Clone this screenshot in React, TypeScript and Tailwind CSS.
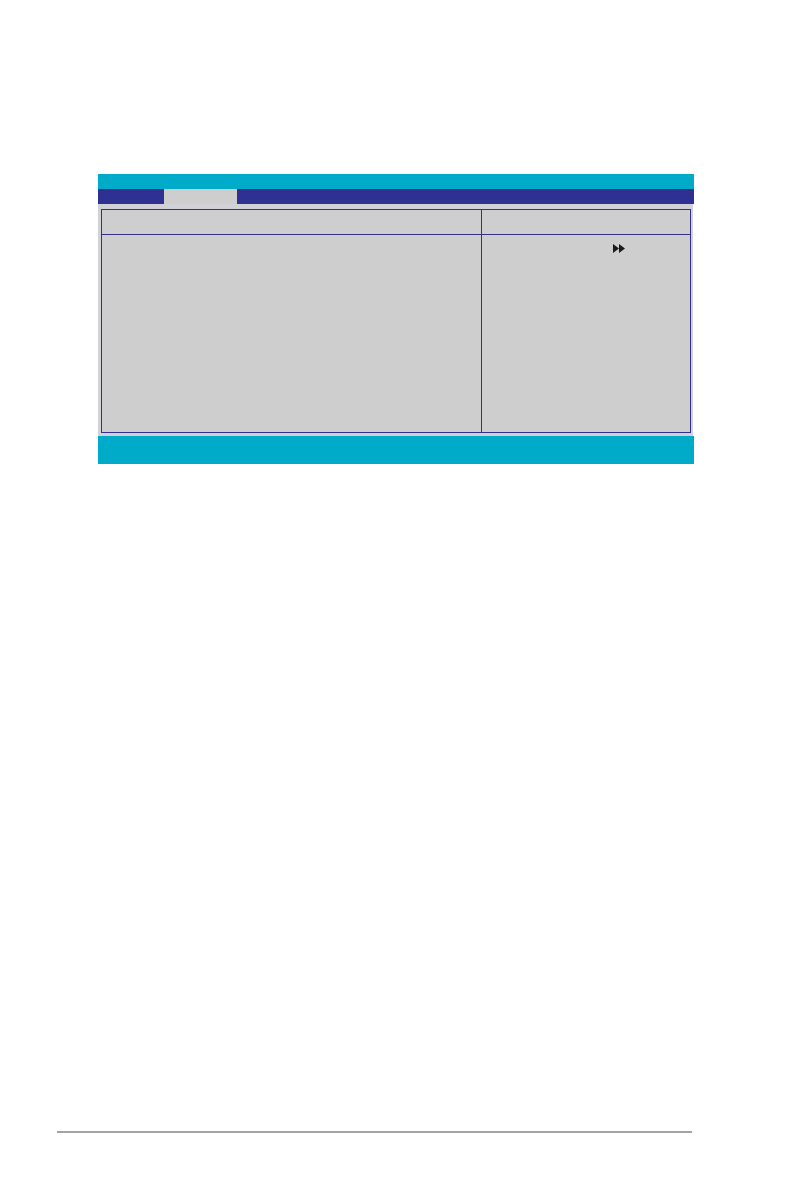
function FastForwardIcon() {
  return (
    <svg width="12" height="9" viewBox="0 0 12 9" fill="#1c1a1b" aria-hidden="true">
      <path d="M0 0L6 4.5L0 9Z" />
      <path d="M6 0L12 4.5L6 9Z" />
    </svg>
  );
}

function SetupScreen() {
  return (
    <section className="ml-[98px] mr-[100px]">
      <header className="h-[15px] bg-[#00abca]" />
      <nav className="flex h-[15px] bg-[#2e3092] pl-[66px]">
        <div className="w-[73px] border-t border-[#a5dbe2] bg-[#cecece]" />
      </nav>
      <div className="mr-px bg-[#d2d1d8] pt-[5px] pr-[2px] pb-[3px] pl-[3px]">
        <div className="grid grid-cols-[1fr_209px] border border-[#35308a] bg-[#cecece]">
          <div className="h-[25px] border-b border-[#35308a]" />
          <div className="h-[25px] border-b border-l border-[#35308a]" />
          <div className="h-[197px]" />
          <div className="h-[197px] border-l border-[#35308a] pt-[9px] pl-[131px]">
            <FastForwardIcon />
          </div>
        </div>
      </div>
      <footer className="h-7 bg-[#00abca]" />
    </section>
  );
}

export default function App() {
  return (
    <main className="flex min-h-screen flex-col bg-white pt-[174px] pb-[63px] font-['Liberation_Sans',sans-serif]">
      <SetupScreen />
      <hr className="mt-auto mr-[102px] ml-[57px] border-t-2 border-[#a3a3a3]" />
    </main>
  );
}
